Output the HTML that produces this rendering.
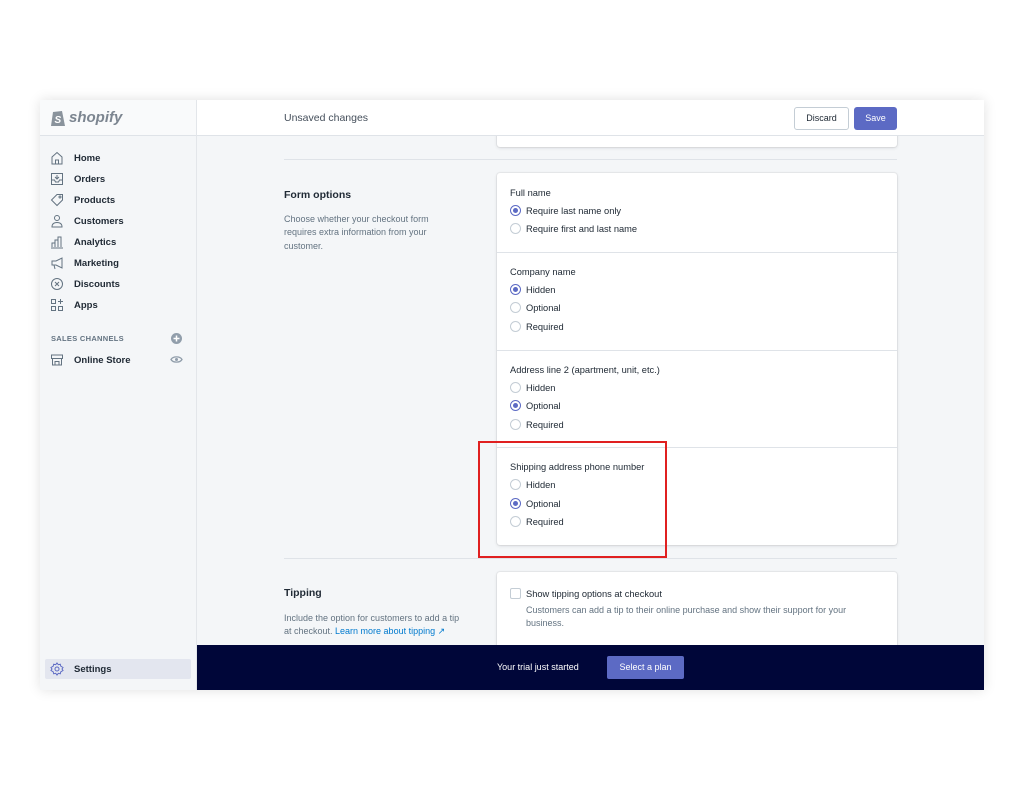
<!DOCTYPE html>
<html><head><meta charset="utf-8"><style>
*{box-sizing:border-box;margin:0;padding:0}
body{width:1024px;height:792px;background:#fff;font-family:"Liberation Sans",sans-serif;position:relative;overflow:hidden;color:#212b36}
.win{position:absolute;left:40px;top:100px;width:944px;height:590px;background:#f4f6f8;box-shadow:0 0 12px rgba(0,0,0,.12);overflow:hidden}
.side{position:absolute;left:0;top:0;width:157px;height:590px;background:#f4f6f8;border-right:1px solid #e3e6ea;z-index:3}
.logo{height:36px;border-bottom:1px solid #dfe3e8;background:#f9fafb;padding:9px 10px;font-weight:bold;font-style:italic;font-size:15px;color:#7c8590;display:flex;align-items:center;gap:3px}
.nav{position:absolute;left:10px;font-size:9.5px;color:#212b36;font-weight:bold;display:flex;align-items:center}
.nav svg{width:14px;height:14px;margin-right:10px}
.hdr{position:absolute;left:157px;top:0;right:0;height:36px;background:#fff;border-bottom:1px solid #dfe3e8;z-index:2}
.abs{position:absolute}
.card{position:absolute;background:#fff;border-radius:3px;box-shadow:0 0 0 1px rgba(63,63,68,.06),0 1px 3px rgba(63,63,68,.15)}
.t{font-size:9.3px;color:#212b36;position:absolute}
.r{position:absolute;font-size:9.3px;color:#212b36;display:flex;align-items:center}
.r i{display:inline-block;width:11px;height:11px;border-radius:50%;border:1px solid #c4cdd5;margin-right:5px;background:#fff;position:relative}
.r i.on{border-color:#5c6ac4}
.r i.on:after{content:"";position:absolute;left:2px;top:2px;width:5px;height:5px;border-radius:50%;background:#5c6ac4}
.sep{position:absolute;left:0;right:0;height:1px;background:#dfe3e8}
.g{color:#637381}
</style></head><body>
<div class="win">
<div class="side">
<div class="logo"><svg width="16" height="19" viewBox="0 0 16 19"><path d="M3 4 L12 3 L15 18 L1 18 Z" fill="#8a939c"/><text x="4.5" y="15" font-size="10" fill="#fff" font-family="Liberation Sans" font-weight="bold">S</text></svg>shopify</div>
<div class="nav" style="top:51px"><svg viewBox="0 0 14 14" fill="none" stroke="#637381"><path d="M2 6 7 1.5 12 6V13H2Z M5.5 13V9h3v4"/></svg>Home</div>
<div class="nav" style="top:72px"><svg viewBox="0 0 14 14" fill="none" stroke="#637381"><path d="M1.5 1.5h11v11h-11z M1.5 8h3l1 2h3l1-2h3 M7 3v4 M5 5l2 2 2-2"/></svg>Orders</div>
<div class="nav" style="top:93px"><svg viewBox="0 0 14 14" fill="none" stroke="#637381"><path d="M7 1.5h5.5V7L7 12.5 1.5 7Z"/><circle cx="10" cy="4" r="1"/></svg>Products</div>
<div class="nav" style="top:114px"><svg viewBox="0 0 14 14" fill="none" stroke="#637381"><circle cx="7" cy="4" r="2.5"/><path d="M2 13c0-3 2-4.5 5-4.5s5 1.5 5 4.5Z"/></svg>Customers</div>
<div class="nav" style="top:135px"><svg viewBox="0 0 14 14" fill="none" stroke="#637381"><path d="M1 13h12 M2 12V8h3v4 M5 12V5h3v7 M8 12V2h3v10"/></svg>Analytics</div>
<div class="nav" style="top:156px"><svg viewBox="0 0 14 14" fill="none" stroke="#637381"><path d="M2 5h4l6-3v10L6 9H2Z M4 9l1 4"/></svg>Marketing</div>
<div class="nav" style="top:177px"><svg viewBox="0 0 14 14" fill="none" stroke="#637381"><circle cx="7" cy="7" r="5.5"/><path d="M5 5l4 4 M9 5 5 9"/></svg>Discounts</div>
<div class="nav" style="top:198px"><svg viewBox="0 0 14 14" fill="none" stroke="#637381"><path d="M1.5 1.5h4v4h-4z M1.5 8.5h4v4h-4z M8.5 8.5h4v4h-4z M10.5 1v5 M8 3.5h5"/></svg>Apps</div>
<div class="abs" style="left:11px;top:234px;font-size:7.5px;color:#637381;font-weight:bold;letter-spacing:.3px">SALES CHANNELS</div>
<svg class="abs" style="left:131px;top:233px" width="11" height="11"><circle cx="5.5" cy="5.5" r="5.5" fill="#919eab"/><path d="M5.5 2.5v6M2.5 5.5h6" stroke="#fff" stroke-width="1.5"/></svg>
<div class="nav" style="top:253px"><svg viewBox="0 0 14 14" fill="none" stroke="#637381"><path d="M1.5 2h11v3.5h-11z M2.5 5.5V12h9V5.5 M5 12V8.5h4V12"/></svg>Online Store</div>
<svg class="abs" style="left:130px;top:255px" width="13" height="9"><path d="M1 4.5C3 1 10 1 12 4.5 10 8 3 8 1 4.5Z" fill="none" stroke="#919eab" stroke-width="1.3"/><circle cx="6.5" cy="4.5" r="1.5" fill="#919eab"/></svg>
<div class="abs" style="left:5px;top:559px;width:146px;height:20px;background:#e3e6ef;border-radius:2px"></div>
<div class="nav" style="top:562px"><svg viewBox="0 0 14 14" fill="none" stroke="#5c6ac4"><circle cx="7" cy="7" r="2"/><path d="M7 1l1.3 1.7 2-.5.5 2L13 5.5 12 7l1 1.5-2.2 1.3-.5 2-2-.5L7 13l-1.3-1.7-2 .5-.5-2L1 8.5 2 7 1 5.5l2.2-1.3.5-2 2 .5Z"/></svg>Settings</div>
</div>
<div class="hdr">
<div class="abs" style="left:87px;top:12px;font-size:10.5px;color:#454f5b">Unsaved changes</div>
<div class="abs" style="left:597px;top:7px;width:55px;height:23px;border:1px solid #c4cdd5;border-radius:3px;font-size:9px;text-align:center;line-height:21px;background:#fff">Discard</div>
<div class="abs" style="left:657px;top:7px;width:43px;height:23px;background:#5c6ac4;border-radius:3px;font-size:9px;text-align:center;line-height:23px;color:#fff">Save</div>
</div>
<div class="card" style="left:457px;top:10px;width:400px;height:37px"></div>
<div class="sep" style="left:244px;right:87px;top:59px"></div>
<div class="abs" style="left:244px;top:89px;font-size:10.5px;font-weight:bold">Form options</div>
<div class="abs g" style="left:244px;top:113px;font-size:9px;line-height:13.3px;width:165px">Choose whether your checkout form requires extra information from your customer.</div>
<div class="card" style="left:457px;top:73px;width:400px;height:372px">
<div class="t" style="left:13px;top:15px">Full name</div>
<div class="r" style="left:13px;top:32px"><i class="on"></i>Require last name only</div>
<div class="r" style="left:13px;top:50px"><i></i>Require first and last name</div>
<div class="sep" style="top:79px"></div>
<div class="t" style="left:13px;top:94px">Company name</div>
<div class="r" style="left:13px;top:111px"><i class="on"></i>Hidden</div>
<div class="r" style="left:13px;top:129px"><i></i>Optional</div>
<div class="r" style="left:13px;top:148px"><i></i>Required</div>
<div class="sep" style="top:177px"></div>
<div class="t" style="left:13px;top:192px">Address line 2 (apartment, unit, etc.)</div>
<div class="r" style="left:13px;top:209px"><i></i>Hidden</div>
<div class="r" style="left:13px;top:227px"><i class="on"></i>Optional</div>
<div class="r" style="left:13px;top:246px"><i></i>Required</div>
<div class="sep" style="top:274px"></div>
<div class="t" style="left:13px;top:289px">Shipping address phone number</div>
<div class="r" style="left:13px;top:306px"><i></i>Hidden</div>
<div class="r" style="left:13px;top:325px"><i class="on"></i>Optional</div>
<div class="r" style="left:13px;top:343px"><i></i>Required</div>
</div>
<div class="abs" style="left:438px;top:341px;width:189px;height:117px;border:2px solid #e02020"></div>
<div class="sep" style="left:244px;right:87px;top:458px"></div>
<div class="abs" style="left:244px;top:487px;font-size:10.5px;font-weight:bold">Tipping</div>
<div class="abs g" style="left:244px;top:512px;font-size:9px;line-height:13.3px;width:178px">Include the option for customers to add a tip at checkout. <span style="color:#007ace">Learn more about tipping ↗</span></div>
<div class="card" style="left:457px;top:472px;width:400px;height:100px">
<div class="r" style="left:13px;top:16px"><i style="border-radius:2px"></i>Show tipping options at checkout</div>
<div class="abs g" style="left:29px;top:32px;font-size:9px;line-height:13.3px;width:350px">Customers can add a tip to their online purchase and show their support for your business.</div>
</div>
<div class="abs" style="left:157px;top:545px;width:787px;height:45px;background:#000639;z-index:4">
<div class="abs" style="left:300px;top:17px;font-size:9px;color:#fff">Your trial just started</div>
<div class="abs" style="left:410px;top:11px;width:77px;height:23px;background:#5c6ac4;border-radius:2px;color:#fff;font-size:9px;text-align:center;line-height:23px">Select a plan</div>
</div>
</div>
</body></html>
